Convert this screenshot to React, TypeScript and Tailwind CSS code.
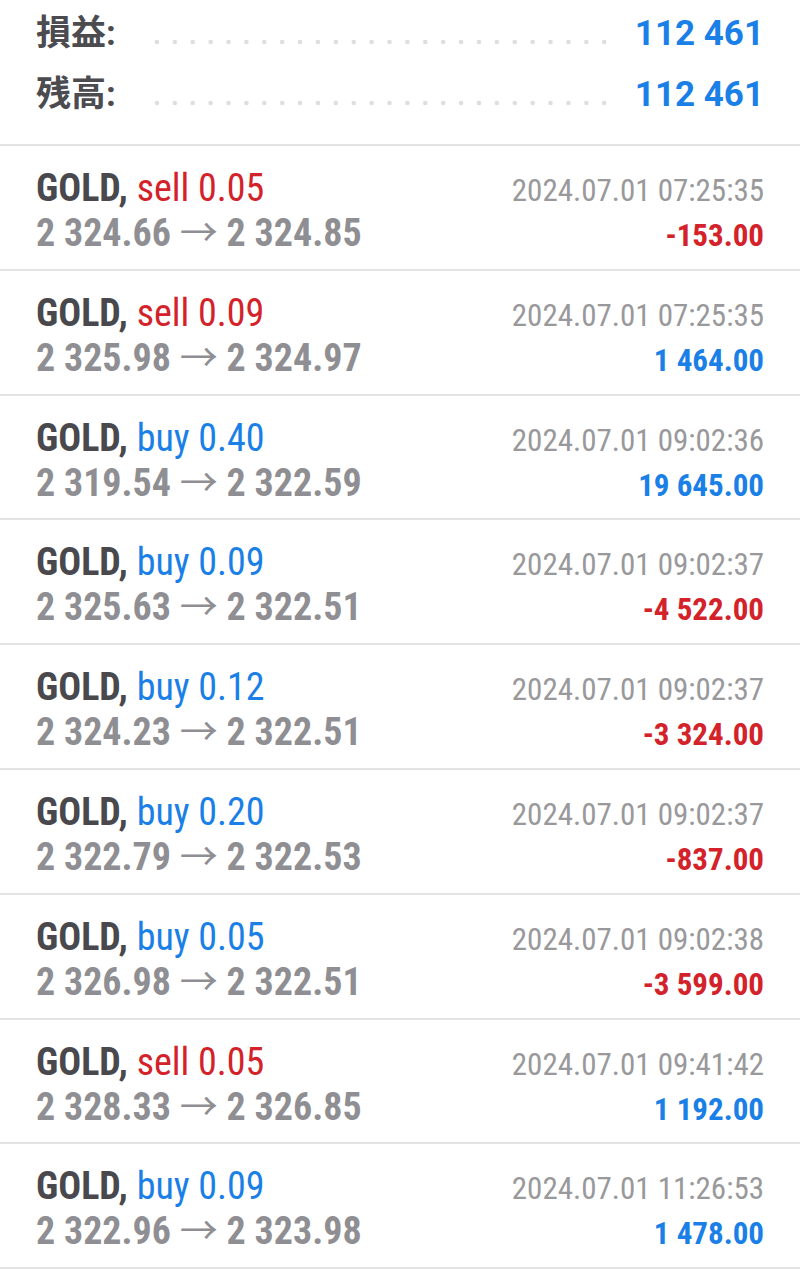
import React from 'react';

type Trade = {
  side: 'buy' | 'sell';
  vol: string;
  open: string;
  close: string;
  time: string;
  profit: string;
};

const trades: Trade[] = [
  { side: 'sell', vol: '0.05', open: '2 324.66', close: '2 324.85', time: '2024.07.01 07:25:35', profit: '-153.00' },
  { side: 'sell', vol: '0.09', open: '2 325.98', close: '2 324.97', time: '2024.07.01 07:25:35', profit: '1 464.00' },
  { side: 'buy', vol: '0.40', open: '2 319.54', close: '2 322.59', time: '2024.07.01 09:02:36', profit: '19 645.00' },
  { side: 'buy', vol: '0.09', open: '2 325.63', close: '2 322.51', time: '2024.07.01 09:02:37', profit: '-4 522.00' },
  { side: 'buy', vol: '0.12', open: '2 324.23', close: '2 322.51', time: '2024.07.01 09:02:37', profit: '-3 324.00' },
  { side: 'buy', vol: '0.20', open: '2 322.79', close: '2 322.53', time: '2024.07.01 09:02:37', profit: '-837.00' },
  { side: 'buy', vol: '0.05', open: '2 326.98', close: '2 322.51', time: '2024.07.01 09:02:38', profit: '-3 599.00' },
  { side: 'sell', vol: '0.05', open: '2 328.33', close: '2 326.85', time: '2024.07.01 09:41:42', profit: '1 192.00' },
  { side: 'buy', vol: '0.09', open: '2 322.96', close: '2 323.98', time: '2024.07.01 11:26:53', profit: '1 478.00' },
];

const cond = { fontFamily: '"Roboto Condensed", Roboto, "Noto Sans CJK JP", sans-serif' };

const SummaryRow: React.FC<{ label: string; value: string }> = ({ label, value }) => (
  <div className="flex items-center h-[61px]">
    <span className="text-[35px] font-bold text-[#4b4b50] w-[112px]" style={{ fontFamily: 'Roboto, "Noto Sans CJK JP", sans-serif' }}>{label}</span>
    {/* dotted leader */}
    <div className="w-[465px] h-[6px] mt-[14px] bg-[radial-gradient(circle,#dedee0_2px,transparent_2.6px)] bg-[length:17.9px_6px] bg-repeat-x" />
    <span className="ml-auto text-[35px] font-bold text-[#1a7fe6]" style={{ fontFamily: 'Roboto, sans-serif' }}>{value}</span>
  </div>
);

const App: React.FC = () => {
  return (
    <div className="w-[800px] h-[1270px] bg-white overflow-hidden" style={cond}>
      <div className="px-[36px] pt-[4px] h-[144px]">
        <SummaryRow label="損益:" value="112 461" />
        <SummaryRow label="残高:" value="112 461" />
      </div>
      {trades.map((t, i) => {
        const sideColor = t.side === 'sell' ? 'text-[#d3222a]' : 'text-[#1a7fe6]';
        const profitColor = t.profit.startsWith('-') ? 'text-[#d3222a]' : 'text-[#1a7fe6]';
        return (
          <div key={i} className="border-t-2 border-[#e3e3e5] h-[124.8px] px-[36px] pt-[20px] flex justify-between">
            <div className="flex flex-col leading-[45px]">
              <div className="text-[38px]">
                <span className="font-bold text-[#48484d]">GOLD, </span>
                <span className={sideColor}>{t.side} {t.vol}</span>
              </div>
              <div className="text-[38px] font-bold text-[#8f8f93]">
                {t.open} <span className="font-normal">→</span> {t.close}
              </div>
            </div>
            <div className="flex flex-col items-end leading-[45px] pt-[2px]">
              <div className="text-[31px] text-[#99999c]">{t.time}</div>
              <div className={`text-[31px] font-bold ${profitColor}`}>{t.profit}</div>
            </div>
          </div>
        );
      })}
      <div className="border-t-2 border-[#e3e3e5]" />
    </div>
  );
};

export default App;
